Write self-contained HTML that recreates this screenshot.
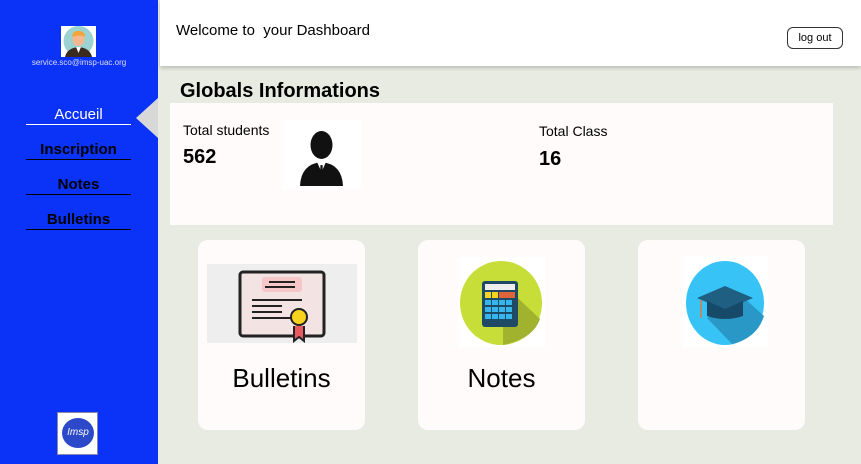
<!DOCTYPE html>
<html><head><style>
*{margin:0;padding:0;box-sizing:border-box}
body{width:861px;height:464px;background:#e8ebe2;font-family:"Liberation Sans","DejaVu Sans",sans-serif;position:relative;overflow:hidden}
.side{position:absolute;left:0;top:0;width:158px;height:464px;background:#0a33f7}
.nav{position:absolute;left:26px;width:105px;text-align:center;font-size:15px;font-weight:bold;color:#000;border-bottom:1px solid #000;height:19px;line-height:17px}
.hdr{position:absolute;left:160px;top:0;width:701px;height:66px;background:#fff;box-shadow:0 2px 4px rgba(0,0,0,.2)}
.card{position:absolute;top:240px;width:167px;height:190px;background:#fffbfa;border-radius:10px}
.ct{position:absolute;width:100%;top:123px;text-align:center;font-size:26px;color:#000}
</style></head><body>
<div class="side">
 <svg style="position:absolute;left:61px;top:26px" width="35" height="31" viewBox="0 0 35 31"><rect width="35" height="31" fill="#fff"/><circle cx="17.5" cy="15" r="15" fill="#9dd2d3"/><path d="M4 31 Q6 22 17.5 21 Q29 22 31 31Z" fill="#3a2a20"/><path d="M15 21 L17.5 27 L20 21Z" fill="#fff"/><ellipse cx="17.5" cy="13" rx="6" ry="7" fill="#f3b88f"/><path d="M11 11 Q12 4 18 5 Q24 5 24 11 Q20 8 11 11Z" fill="#f2a53a"/></svg>
 <div style="position:absolute;left:0;width:158px;top:58px;text-align:center;font-size:8px;color:#dde">service.sco@imsp-uac.org</div>
 <div class="nav" style="top:106px;color:#fff;border-color:#fff;font-weight:normal">Accueil</div>
 <div class="nav" style="top:141px">Inscription</div>
 <div class="nav" style="top:176px">Notes</div>
 <div class="nav" style="top:211px">Bulletins</div>
 <div style="position:absolute;left:57px;top:412px;width:41px;height:43px;background:#fff;border:1px solid #88a"><div style="position:absolute;left:4px;top:5px;width:32px;height:30px;border-radius:50%;background:#2c49c9;color:#fff;font-size:10px;font-style:italic;text-align:center;line-height:30px">Imsp</div></div>
</div>
<div style="position:absolute;left:136px;top:98px;width:0;height:0;border-top:20px solid transparent;border-bottom:20px solid transparent;border-right:22px solid #d8d8d8"></div>
<div class="hdr">
 <div style="position:absolute;left:16px;top:22px;font-size:15px">Welcome to &nbsp;your Dashboard</div>
 <div style="position:absolute;left:627px;top:27px;width:56px;height:22px;border:1px solid #333;border-radius:6px;font-size:11px;text-align:center;line-height:20px">log out</div>
</div>
<div style="position:absolute;left:180px;top:80px;font-size:20px;font-weight:bold;color:#000">Globals Informations</div>
<div style="position:absolute;left:170px;top:103px;width:663px;height:122px;background:#fffbfa">
 <div style="position:absolute;left:13px;top:19px;font-size:14px">Total students</div>
 <div style="position:absolute;left:13px;top:43px;font-size:20px;font-weight:bold">562</div>
 <div style="position:absolute;left:112px;top:17px;width:79px;height:70px;background:#fff"><svg width="79" height="70" viewBox="0 0 79 70"><ellipse cx="39.5" cy="25" rx="11" ry="14" fill="#111"/><path d="M18 66 Q19 44 39.5 42 Q60 44 61 66Z" fill="#111"/><path d="M35 42 L39.5 52 L44 42Z" fill="#fff"/><path d="M38.5 45 L40.5 45 L41 54 L39.5 57 L38 54Z" fill="#111"/></svg></div>
 <div style="position:absolute;left:369px;top:20px;font-size:14px">Total Class</div>
 <div style="position:absolute;left:369px;top:45px;font-size:20px;font-weight:bold">16</div>
</div>
<div class="card" style="left:198px">
 <div style="position:absolute;left:9px;top:24px;width:150px;height:79px;background:#eee"><svg width="150" height="79" viewBox="0 0 150 79"><rect x="33" y="8" width="84" height="64" rx="3" fill="#f3e3e3" stroke="#222" stroke-width="3"/><rect x="55" y="13" width="40" height="15" rx="3" fill="#f6c6c8"/><path d="M62 18h26M58 23h30M45 36h50M45 42h30M45 48h30M45 54h40" stroke="#222" stroke-width="2"/><path d="M87 62 v15 l5-4 5 4 v-15" fill="#e85a60" stroke="#222" stroke-width="2"/><circle cx="92" cy="53" r="8" fill="#f7d21e" stroke="#222" stroke-width="2"/></svg></div>
 <div class="ct">Bulletins</div>
</div>
<div class="card" style="left:418px;width:167px">
 <div style="position:absolute;left:40px;top:17px;width:87px;height:90px;background:#fff"><svg width="87" height="90" viewBox="0 0 87 90"><ellipse cx="43" cy="46" rx="41" ry="42" fill="#c7de38"/><path d="M45 27 L82 62 Q75 82 45 88Z" fill="#a0b22e"/><rect x="24" y="24" width="36" height="46" rx="3" fill="#1e4a66"/><rect x="27" y="27" width="30" height="6" fill="#eee"/><rect x="27" y="35" width="6" height="6" fill="#f7d21e"/><rect x="34" y="35" width="6" height="6" fill="#f7d21e"/><rect x="41" y="35" width="16" height="6" fill="#e0643a"/><g fill="#35b7ee"><rect x="27" y="43" width="6" height="5"/><rect x="34" y="43" width="6" height="5"/><rect x="41" y="43" width="6" height="5"/><rect x="48" y="43" width="6" height="5"/><rect x="27" y="50" width="6" height="5"/><rect x="34" y="50" width="6" height="5"/><rect x="41" y="50" width="6" height="5"/><rect x="48" y="50" width="6" height="5"/><rect x="27" y="57" width="6" height="5"/><rect x="34" y="57" width="6" height="5"/><rect x="41" y="57" width="6" height="5"/><rect x="48" y="57" width="6" height="5"/></g></svg></div>
 <div class="ct">Notes</div>
</div>
<div class="card" style="left:638px">
 <div style="position:absolute;left:44px;top:16px;width:86px;height:91px;background:#fff"><svg width="86" height="91" viewBox="0 0 86 91"><ellipse cx="43" cy="47" rx="39" ry="42" fill="#38c3f7"/><path d="M60 40 L82 60 Q75 82 50 88 L25 62Z" fill="#2a98c7"/><path d="M15 42 L43 30 L71 42 L43 54Z" fill="#1e5f82"/><path d="M25 45 v15 q18 6 36 0 v-15 l-18 8Z" fill="#174a68"/><path d="M19 44 v18" stroke="#e07a3a" stroke-width="1.5"/></svg></div>
</div>
</body></html>
